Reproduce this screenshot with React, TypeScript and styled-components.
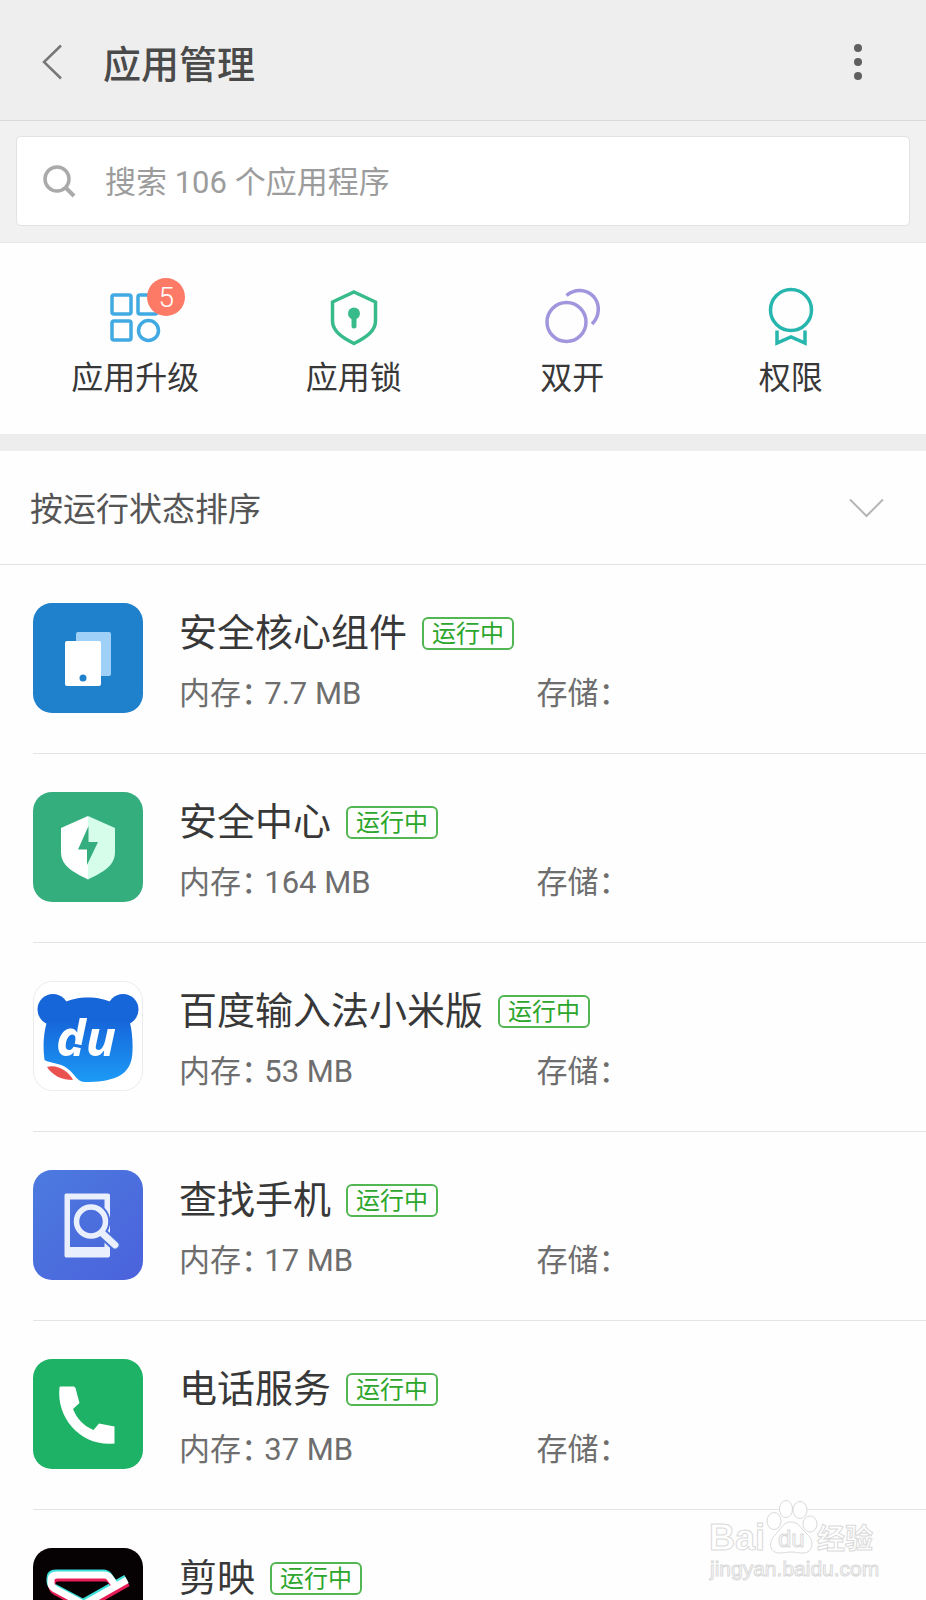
import React from "react";
import styled, { createGlobalStyle } from "styled-components";

const GlobalStyle = createGlobalStyle`
  *, *::before, *::after { box-sizing: border-box; }
  body {
    margin: 0;
    background: #fefefe;
    color: #383838;
    font-family: Roboto, "Noto Sans CJK SC", sans-serif;
    font-weight: 400;
  }
  button, input { font: inherit; color: inherit; }
`;

const Screen = styled.div`
  position: relative;
  display: flex;
  flex-direction: column;
  height: 100vh;
  overflow: hidden;
`;

const Header = styled.header`
  display: flex;
  align-items: center;
  flex: none;
  height: 121px;
  padding: 4px 49px 0 33px;
  background: #eee;
  border-bottom: 1px solid #d8d8d8;
`;

const IconButton = styled.button`
  display: flex;
  align-items: center;
  justify-content: center;
  width: 38px;
  height: 52px;
  padding: 0;
  border: 0;
  background: none;
  cursor: pointer;
`;

const Title = styled.h1`
  flex: 1;
  margin: 0 0 0 32px;
  padding-top: 6px;
  font-size: 38px;
  line-height: 56px;
  font-weight: 500;
  color: #4a4a4a;
`;

const SearchArea = styled.div`
  flex: none;
  padding: 15px 16px 16px;
  background: #f1f1f1;
  border-bottom: 1px solid #e9e9e9;
`;

const SearchBox = styled.label`
  display: flex;
  align-items: center;
  gap: 29px;
  height: 90px;
  padding: 0 26px;
  background: #fff;
  border: 1px solid #e2e2e2;
  border-radius: 5px;
`;

const SearchInput = styled.input`
  flex: 1;
  min-width: 0;
  height: 60px;
  padding: 2px 0 0;
  border: 0;
  outline: 0;
  background: none;
  font-size: 31px;
  &::placeholder { color: #9c9c9c; opacity: 1; }
`;

const Actions = styled.nav`
  display: grid;
  grid-template-columns: repeat(4, 1fr);
  flex: none;
  padding: 44px 26px 36px;
`;

const Action = styled.button`
  display: flex;
  flex-direction: column;
  align-items: center;
  gap: 11px;
  padding: 0;
  border: 0;
  background: none;
  font-size: 32px;
  line-height: 40px;
  cursor: pointer;
`;

const ActionIcon = styled.span`
  position: relative;
  width: 60px;
  height: 60px;
  svg { display: block; }
`;

const Count = styled.span`
  position: absolute;
  top: -9px;
  right: -20px;
  width: 38px;
  height: 38px;
  border-radius: 50%;
  background: #fd7a67;
  color: #fff;
  font-size: 28px;
  line-height: 40px;
  font-weight: 300;
  text-align: center;
`;

const SortRow = styled.button`
  display: flex;
  align-items: center;
  justify-content: space-between;
  flex: none;
  height: 131px;
  padding: 2px 42px 0 30px;
  border: solid #ededed;
  border-width: 17px 0 1px;
  border-bottom-color: #e2e2e2;
  background: none;
  font-size: 33px;
  line-height: 48px;
  color: #555;
  cursor: pointer;

  svg { margin-bottom: 2px; }
  span { padding-top: 2px; }
`;

const AppList = styled.ul`
  flex: 1;
  min-height: 0;
  margin: 0;
  padding: 0 0 0 33px;
  overflow: hidden auto;
  list-style: none;
  scrollbar-width: none;
`;

const AppRow = styled.li`
  display: flex;
  gap: 36px;
  height: 189px;
  padding: 38px 32px 28px 0;
  border-bottom: 1px solid #e4e4e4;
`;

const AppIcon = styled.svg`
  flex: none;
  width: 110px;
  height: 110px;
`;

const AppBody = styled.div`
  flex: 1;
  min-width: 0;
`;

const NameLine = styled.div`
  display: flex;
  align-items: center;
  gap: 15px;
  height: 60px;
`;

const AppName = styled.h2`
  margin: 0;
  font-size: 38px;
  line-height: 60px;
  font-weight: 400;
  white-space: nowrap;
`;

const Running = styled.span`
  padding: 2px 8px 0;
  border: 2px solid #52b752;
  border-radius: 6px;
  color: #2ca62c;
  font-size: 24px;
  line-height: 27px;
  white-space: nowrap;
`;

const Meta = styled.div`
  display: grid;
  grid-template-columns: 1fr 1fr;
  font-size: 31px;
  line-height: 62px;
  color: #6e6e6e;
  white-space: pre;
  font-feature-settings: "halt";
`;

const Watermark = styled.svg`
  position: absolute;
  right: 46px;
  bottom: 16px;
  width: 172px;
  height: 88px;
  pointer-events: none;
`;

const UpgradeIcon = () => (
  <svg width="60" height="60" viewBox="0 0 60 60" fill="none" stroke="#42aae2" strokeWidth="3.500">
    <rect x="7" y="8" width="19" height="19" rx="2" />
    <rect x="33" y="8" width="19" height="19" rx="2" />
    <rect x="7" y="34" width="19" height="19" rx="2" />
    <circle cx="43.500" cy="43.500" r="10" />
  </svg>
);

const LockIcon = () => (
  <svg width="60" height="60" viewBox="0 0 60 60" fill="none" stroke="#38bb8b" strokeWidth="3.500">
    <path d="M30 5 L51.500 15 V34 C51.500 44 42 50.500 30 56.500 C18 50.500 8.500 44 8.500 34 V15 Z" />
    <circle cx="30" cy="26.500" r="6" fill="#38bb8b" stroke="none" />
    <path d="M30 27 V39" strokeWidth="5" strokeLinecap="round" />
  </svg>
);

const DualIcon = () => (
  <svg width="60" height="60" viewBox="0 0 60 60" fill="none" stroke="#a096dd" strokeWidth="3.500">
    <circle cx="24.500" cy="35" r="19.500" />
    <path d="M24.500 8.500 C33 1 45 2 52 10 C58 17.500 58 29 50 37" />
  </svg>
);

const PermissionIcon = () => (
  <svg width="60" height="60" viewBox="0 0 60 60" fill="none" stroke="#27b6ae" strokeWidth="3.500">
    <circle cx="30" cy="23" r="20.500" />
    <path d="M16 43.500 V56 L30 50 L44 56 V43.500" />
  </svg>
);

const CoreIcon = () => (
  <>
    <rect width="110" height="110" rx="19" fill="#1f80cb" />
    <rect x="43" y="29" width="35" height="44" rx="2" fill="#9fd0f8" />
    <rect x="32" y="38" width="36" height="45" rx="2" fill="#fff" />
    <circle cx="50" cy="75" r="3.500" fill="#1f80cb" />
  </>
);

const SecurityIcon = () => (
  <>
    <rect width="110" height="110" rx="19" fill="#35ae7e" />
    <path d="M55 24 L28 36 V60 C28 74 40 80 55 87.500 Z" fill="#fff" />
    <path d="M55 24 L82 36 V60 C82 74 70 80 55 87.500 Z" fill="#d5fdea" />
    <path d="M55.500 34 L45 57.500 H54 V73 L65 50 H55.500 Z" fill="#35ae7e" />
  </>
);

const InputIcon = () => (
  <>
    <defs>
      <linearGradient id="bear" gradientUnits="userSpaceOnUse" x1="0" y1="14" x2="0" y2="100">
        <stop offset="0.300" stopColor="#1666da" />
        <stop offset="1" stopColor="#1c9af6" />
      </linearGradient>
    </defs>
    <rect x="0.500" y="0.500" width="109" height="109" rx="19" fill="#fff" stroke="#ececec" />
    <g fill="url(#bear)">
      <circle cx="20" cy="28.500" r="15.500" />
      <circle cx="90" cy="28.500" r="15.500" />
      <path d="M30 22 C43 14.500 67 14.500 80 22 L97 42 C99 50 100.500 64 99 76 C96 96 78 101 52 101 C44 101 42 93 35 88 C27 81 18 83 11.500 79 C9.500 65 11 50 14 41 Z" />
    </g>
    <path d="M14 86 C25 83 36 91 40 99 C29 99 20 95 14 86 Z" fill="#e9524f" />
    <text x="23" y="75" fill="#fff" fontFamily="Open Sans, sans-serif" fontWeight="700" fontStyle="italic" fontSize="50">du</text>
    <path d="M40 64 L55 67" stroke="#1978e3" strokeWidth="3" />
  </>
);

const FindIcon = () => (
  <>
    <defs>
      <linearGradient id="find" x1="0" y1="0" x2="1" y2="1">
        <stop offset="0" stopColor="#4c7bdf" />
        <stop offset="1" stopColor="#4b62dc" />
      </linearGradient>
    </defs>
    <rect width="110" height="110" rx="19" fill="url(#find)" />
    <path fillRule="evenodd" fill="#e9effc" d="M33 23.500 H75 Q77 23.500 77 25.500 V85.500 Q77 87.500 75 87.500 H33 Q31.500 87.500 31.500 85.500 V25.500 Q31.500 23.500 33 23.500 Z M37 29.500 V77 H71.500 V29.500 Z" />
    <g fill="none" strokeLinecap="round">
      <g stroke="#4b70de">
        <circle cx="58" cy="51.500" r="14.500" strokeWidth="9.500" />
        <path d="M69 63 L82 75" strokeWidth="11" />
      </g>
      <g stroke="#e9effc">
        <circle cx="58" cy="51.500" r="14.500" strokeWidth="5.500" />
        <path d="M69 63 L82 75" strokeWidth="7" />
      </g>
    </g>
  </>
);

const PhoneIcon = () => (
  <>
    <rect width="110" height="110" rx="19" fill="#1db266" />
    <path d="M26.500 28.500 Q26.500 27.500 27.500 27.500 H41 L42.500 29 L46.500 44 L40 50 C44 60 51 67 60.500 71 L66 64.500 L81.500 67.500 V84.500 C49 88 23 60 26.500 28.500 Z" fill="#fff" />
  </>
);

const cutPath = "M54 58 L22 41 Q18 39 18 35 V32 Q18 27 24 27 H71 Q75 27 77 30 L82 37 M48 58 L94 32";

const CutIcon = () => (
  <>
    <rect width="110" height="110" rx="19" fill="#060203" />
    <g fill="none" strokeWidth="7">
      <path d={cutPath} stroke="#3ee0dc" transform="translate(-1 -2)" />
      <path d={cutPath} stroke="#e51c56" transform="translate(1 3)" />
      <path d={cutPath} stroke="#fff" />
    </g>
  </>
);

const actions = [
  { label: "应用升级", Icon: UpgradeIcon, count: 5 },
  { label: "应用锁", Icon: LockIcon },
  { label: "双开", Icon: DualIcon },
  { label: "权限", Icon: PermissionIcon },
];

const apps = [
  { name: "安全核心组件", memory: "7.7 MB", Icon: CoreIcon },
  { name: "安全中心", memory: "164 MB", Icon: SecurityIcon },
  { name: "百度输入法小米版", memory: "53 MB", Icon: InputIcon },
  { name: "查找手机", memory: "17 MB", Icon: FindIcon },
  { name: "电话服务", memory: "37 MB", Icon: PhoneIcon },
  { name: "剪映", memory: "", Icon: CutIcon },
];

export default function App() {
  return (
    <Screen>
      <GlobalStyle />
      <Header>
        <IconButton aria-label="返回">
          <svg width="22" height="36" viewBox="0 0 22 36" fill="none" stroke="#777" strokeWidth="2.500">
            <path d="M20 1.500 L3 18 L20 34.500" />
          </svg>
        </IconButton>
        <Title>应用管理</Title>
        <IconButton aria-label="更多">
          <svg width="10" height="38" viewBox="0 0 10 38" fill="#606060">
            <circle cx="5" cy="5" r="4" />
            <circle cx="5" cy="19" r="4" />
            <circle cx="5" cy="33" r="4" />
          </svg>
        </IconButton>
      </Header>
      <SearchArea>
        <SearchBox>
          <svg width="33" height="33" viewBox="0 0 33 33" fill="none" stroke="#aaa" strokeWidth="3.500">
            <circle cx="14" cy="14" r="12" />
            <path d="M22.500 22.500 L31 31" strokeWidth="4" />
          </svg>
          <SearchInput type="search" aria-label="搜索应用程序" placeholder="搜索 106 个应用程序" />
        </SearchBox>
      </SearchArea>
      <Actions>
        {actions.map(({ label, Icon, count }) => (
          <Action key={label}>
            <ActionIcon>
              <Icon />
              {count && <Count>{count}</Count>}
            </ActionIcon>
            {label}
          </Action>
        ))}
      </Actions>
      <SortRow>
        <span>按运行状态排序</span>
        <svg width="35" height="20" viewBox="0 0 35 20" fill="none" stroke="#b5b5b5" strokeWidth="2">
          <path d="M1 1.500 L17.500 18 L34 1.500" />
        </svg>
      </SortRow>
      <AppList>
        {apps.map(({ name, memory, Icon }) => (
          <AppRow key={name}>
            <AppIcon viewBox="0 0 110 110" aria-hidden="true">
              <Icon />
            </AppIcon>
            <AppBody>
              <NameLine>
                <AppName>{name}</AppName>
                <Running>运行中</Running>
              </NameLine>
              {memory && (
                <Meta>
                  <span>内存： {memory}</span>
                  <span>存储：</span>
                </Meta>
              )}
            </AppBody>
          </AppRow>
        ))}
      </AppList>
      <Watermark viewBox="0 0 172 88" aria-hidden="true">
        <g fill="#fff" stroke="#dadada" strokeWidth="1">
          <text x="1" y="54" fontFamily="Liberation Sans, sans-serif" fontWeight="700" fontSize="36">Bai</text>
          <ellipse cx="66" cy="25" rx="7" ry="8.500" />
          <ellipse cx="78" cy="13" rx="6.500" ry="8.500" />
          <ellipse cx="92" cy="14" rx="7" ry="8.500" />
          <ellipse cx="102" cy="28" rx="7" ry="8" />
          <path d="M83 26 C91 26 93 33 99 38 C107 45 105 57 95 57 C89 57 88 56 83 56 C78 56 77 57 72 57 C61 57 60 46 67 39 C73 33 75 26 83 26 Z" />
          <text x="70" y="51" fontFamily="Liberation Sans, sans-serif" fontSize="24">du</text>
          <text x="109" y="53" fontFamily="Noto Sans CJK SC, sans-serif" fontWeight="700" fontSize="28">经验</text>
          <text x="2" y="80" fontFamily="Liberation Sans, sans-serif" fontSize="21">jingyan.baidu.com</text>
        </g>
      </Watermark>
    </Screen>
  );
}
